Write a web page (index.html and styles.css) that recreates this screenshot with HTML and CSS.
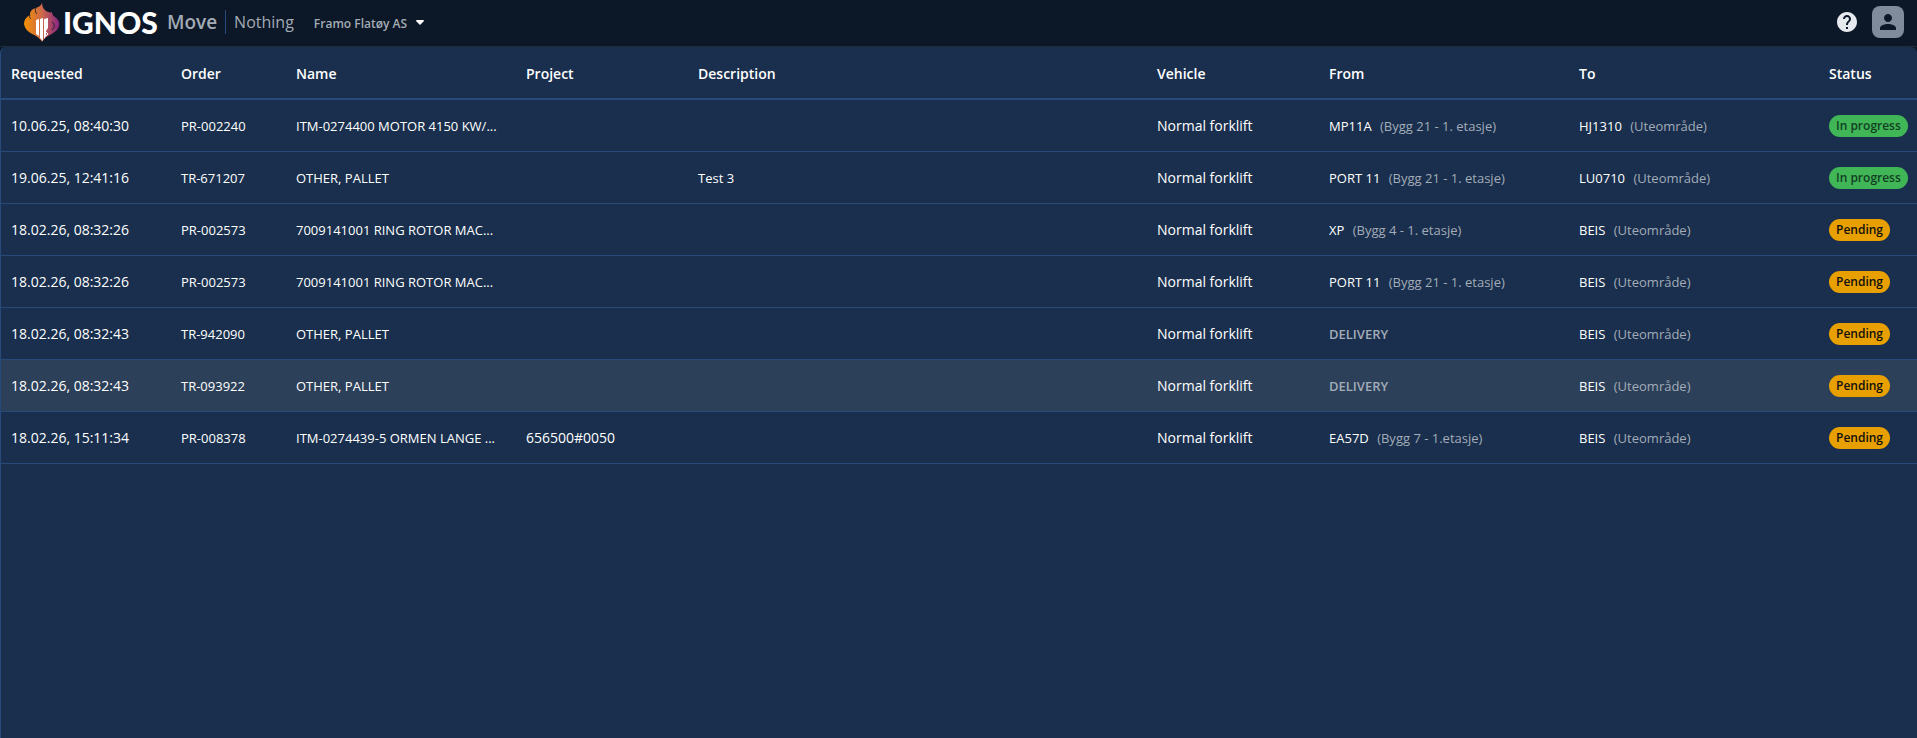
FILE: index.html
```html
<!DOCTYPE html>
<html lang="en">
<head>
    <meta charset="UTF-8">
    <meta name="viewport" content="width=device-width, initial-scale=1.0">
    <title>Ignos Move</title>
    <link rel="stylesheet" href="styles.css">
</head>
<body>
    <header class="topbar">
        <a class="logo" href="#">
            <svg class="logo-mark" viewBox="0 0 36 40" aria-hidden="true">
                <defs>
                    <linearGradient id="flame" x1="0" y1="0" x2="1" y2="0">
                        <stop offset="0" stop-color="#f39200"/>
                        <stop offset="0.5" stop-color="#cf6a4a"/>
                        <stop offset="1" stop-color="#862483"/>
                    </linearGradient>
                </defs>
                <path fill="url(#flame)" d="M18 0C18 4 19 7 22 9C24 10 26 11 28 10C28 12 29 14 31 15C34 17 36 20 35 24C34 29 29 31 24 34C21 36 19 38 18 40C17 38 15 36 12 34C6 31 1 28 0 22C0 18 2 15 6 13C6 9 8 7 12 6C15 5 18 3 18 0Z"/>
                <path fill="none" stroke="#0c1727" stroke-width="0.800" d="M12 6C11 8 11 10 13 12M6 13C5 15 6 16 7 17M28 20C31 22 31 25 28 28"/>
                <path fill="#fff" d="M12 18L15 17V34L12 32ZM16 17L19 16V39L16 36ZM20 17L24 16V26L22 29V34L20 37Z"/>
                <path fill="none" stroke="#fff" stroke-width="1" d="M22 30L24 32L22 34"/>
            </svg>
            <span class="logo-name">IGNOS</span>
            <span class="logo-app">Move</span>
        </a>
        <span class="page-name">Nothing</span>
        <div class="site-picker">
            <select class="site-select" aria-label="Site">
                <option>Framo Flatøy AS</option>
            </select>
            <svg class="site-caret" viewBox="0 0 8 5" aria-hidden="true"><path fill="#fff" d="M1 0H7Q8 0 8 1L4 5L0 1Q0 0 1 0Z"/></svg>
        </div>
        <div class="actions">
            <button class="help-btn" type="button" aria-label="Help">
                <svg viewBox="2 2 20 20"><path fill="#e6e9ed" d="M12 2C6.48 2 2 6.48 2 12s4.480 10 10 10 10-4.480 10-10S17.520 2 12 2zm1 17h-2v-2h2v2zm2.070-7.750l-.9.920C13.450 12.900 13 13.500 13 15h-2v-.5c0-1.100.45-2.100 1.170-2.830l1.240-1.260c.37-.36.59-.86.59-1.410 0-1.100-.9-2-2-2s-2 .9-2 2H8c0-2.210 1.790-4 4-4s4 1.790 4 4c0 .88-.36 1.680-.93 2.250z"/></svg>
            </button>
            <button class="avatar-btn" type="button" aria-label="Account">
                <svg viewBox="4 4 16 16"><path fill="#0c1727" d="M12 12c2.210 0 4-1.790 4-4s-1.790-4-4-4-4 1.790-4 4 1.790 4 4 4zm0 2c-2.670 0-8 1.340-8 4v2h16v-2c0-2.660-5.330-4-8-4z"/></svg>
            </button>
        </div>
    </header>

    <main class="requests">
        <table class="requests-table">
            <colgroup>
                <col class="col-requested">
                <col class="col-order">
                <col class="col-name">
                <col class="col-project">
                <col class="col-description">
                <col class="col-vehicle">
                <col class="col-place">
                <col class="col-place">
                <col class="col-status">
            </colgroup>
            <thead>
                <tr>
                    <th>Requested</th>
                    <th>Order</th>
                    <th>Name</th>
                    <th>Project</th>
                    <th>Description</th>
                    <th>Vehicle</th>
                    <th>From</th>
                    <th>To</th>
                    <th>Status</th>
                </tr>
            </thead>
            <tbody>
                <tr>
                    <td>10.06.25, 08:40:30</td>
                    <td class="small">PR-002240</td>
                    <td class="small">ITM-0274400 MOTOR 4150 KW/...</td>
                    <td></td>
                    <td class="small"></td>
                    <td>Normal forklift</td>
                    <td class="small"><span class="place">MP11A</span> <span class="area">(Bygg 21 - 1. etasje)</span></td>
                    <td class="small"><span class="place">HJ1310</span> <span class="area">(Uteområde)</span></td>
                    <td><span class="badge progress">In progress</span></td>
                </tr>
                <tr>
                    <td>19.06.25, 12:41:16</td>
                    <td class="small">TR-671207</td>
                    <td class="small">OTHER, PALLET</td>
                    <td></td>
                    <td class="small">Test 3</td>
                    <td>Normal forklift</td>
                    <td class="small"><span class="place">PORT 11</span> <span class="area">(Bygg 21 - 1. etasje)</span></td>
                    <td class="small"><span class="place">LU0710</span> <span class="area">(Uteområde)</span></td>
                    <td><span class="badge progress">In progress</span></td>
                </tr>
                <tr>
                    <td>18.02.26, 08:32:26</td>
                    <td class="small">PR-002573</td>
                    <td class="small">7009141001 RING ROTOR MAC...</td>
                    <td></td>
                    <td class="small"></td>
                    <td>Normal forklift</td>
                    <td class="small"><span class="place">XP</span> <span class="area">(Bygg 4 - 1. etasje)</span></td>
                    <td class="small"><span class="place">BEIS</span> <span class="area">(Uteområde)</span></td>
                    <td><span class="badge pending">Pending</span></td>
                </tr>
                <tr>
                    <td>18.02.26, 08:32:26</td>
                    <td class="small">PR-002573</td>
                    <td class="small">7009141001 RING ROTOR MAC...</td>
                    <td></td>
                    <td class="small"></td>
                    <td>Normal forklift</td>
                    <td class="small"><span class="place">PORT 11</span> <span class="area">(Bygg 21 - 1. etasje)</span></td>
                    <td class="small"><span class="place">BEIS</span> <span class="area">(Uteområde)</span></td>
                    <td><span class="badge pending">Pending</span></td>
                </tr>
                <tr>
                    <td>18.02.26, 08:32:43</td>
                    <td class="small">TR-942090</td>
                    <td class="small">OTHER, PALLET</td>
                    <td></td>
                    <td class="small"></td>
                    <td>Normal forklift</td>
                    <td class="small delivery">DELIVERY</td>
                    <td class="small"><span class="place">BEIS</span> <span class="area">(Uteområde)</span></td>
                    <td><span class="badge pending">Pending</span></td>
                </tr>
                <tr class="active">
                    <td>18.02.26, 08:32:43</td>
                    <td class="small">TR-093922</td>
                    <td class="small">OTHER, PALLET</td>
                    <td></td>
                    <td class="small"></td>
                    <td>Normal forklift</td>
                    <td class="small delivery">DELIVERY</td>
                    <td class="small"><span class="place">BEIS</span> <span class="area">(Uteområde)</span></td>
                    <td><span class="badge pending">Pending</span></td>
                </tr>
                <tr>
                    <td>18.02.26, 15:11:34</td>
                    <td class="small">PR-008378</td>
                    <td class="small">ITM-0274439-5 ORMEN LANGE ...</td>
                    <td>656500#0050</td>
                    <td class="small"></td>
                    <td>Normal forklift</td>
                    <td class="small"><span class="place">EA57D</span> <span class="area">(Bygg 7 - 1.etasje)</span></td>
                    <td class="small"><span class="place">BEIS</span> <span class="area">(Uteområde)</span></td>
                    <td><span class="badge pending">Pending</span></td>
                </tr>
            </tbody>
        </table>
    </main>
</body>
</html>
```

FILE: styles.css
```css
* {
    margin: 0;
    padding: 0;
    box-sizing: border-box;
}

body {
    display: flex;
    flex-direction: column;
    min-height: 100vh;
    background-color: #0c1727;
    color: #fff;
    font-family: "Open Sans", "Noto Sans", sans-serif;
    font-size: 14px;
}

.topbar {
    display: flex;
    align-items: center;
    height: 47px;
    padding: 0 13px 2px 24px;
    border-bottom: 1px solid #1e2a35;
}

.logo {
    display: flex;
    align-items: center;
    color: #fff;
    text-decoration: none;
}

.logo-mark {
    width: 36px;
    height: 40px;
}

.logo-name {
    margin-left: 3px;
    font-family: Lato, sans-serif;
    font-size: 30px;
    font-weight: 900;
    line-height: 40px;
}

.logo-app {
    margin-left: 9px;
    color: #a3abb5;
    font-size: 19px;
    font-weight: 600;
}

.page-name {
    margin-left: 8px;
    padding-left: 8px;
    border-left: 1px solid #264a7a;
    color: #a3abb5;
    font-size: 16px;
    line-height: 24px;
}

.site-picker {
    position: relative;
    margin-left: 20px;
}

.site-select {
    appearance: none;
    padding-right: 16px;
    border: none;
    background: transparent;
    color: #a3abb5;
    font-family: inherit;
    font-size: 12px;
    font-weight: 600;
    cursor: pointer;
}

.site-caret {
    position: absolute;
    top: 50%;
    right: 0;
    width: 8px;
    height: 5px;
    margin-top: -2px;
    pointer-events: none;
}

.actions {
    display: flex;
    align-items: center;
    gap: 15px;
    margin-left: auto;
}

.help-btn,
.avatar-btn {
    display: flex;
    align-items: center;
    justify-content: center;
    border: none;
    background: transparent;
    cursor: pointer;
}

.help-btn svg {
    width: 20px;
    height: 20px;
}

.avatar-btn {
    width: 32px;
    height: 32px;
    border-radius: 8px;
    background-color: #808c9c;
}

.avatar-btn svg {
    width: 16px;
    height: 16px;
}

.requests {
    flex: 1;
    border-left: 1px solid #264a7a;
    border-radius: 6px 6px 0 0;
    background-color: #192f4d;
}

.requests-table {
    width: 100%;
    border-collapse: separate;
    border-spacing: 0;
    table-layout: fixed;
}

.col-requested {
    width: 170px;
}

.col-order {
    width: 115px;
}

.col-name {
    width: 230px;
}

.col-project,
.col-vehicle {
    width: 172px;
}

.col-place {
    width: 250px;
}

.col-status {
    width: 98px;
}

.requests-table th,
.requests-table td {
    height: 52px;
    padding: 0 10px;
    border-bottom: 1px solid #264a7a;
    text-align: left;
    white-space: nowrap;
}

.requests-table th {
    height: 53px;
    padding-top: 2px;
    border-bottom-width: 2px;
    font-weight: 600;
}

.requests-table td.small {
    font-size: 13px;
}

.requests-table .active td {
    background-color: #2c405a;
}

.place {
    font-weight: 500;
}

.area {
    margin-left: 5px;
    color: #a3acb8;
}

.requests-table .delivery {
    color: #a3acb8;
    font-weight: 600;
}

.badge {
    display: inline-block;
    padding: 0 7px;
    border-radius: 11px;
    font-size: 12px;
    font-weight: 600;
    line-height: 22px;
    vertical-align: middle;
}

.progress {
    background-color: #40b656;
    color: #123f25;
}

.pending {
    background-color: #e8a000;
    color: #0f0f0f;
}

@media (max-width: 1400px) {
    .requests {
        overflow-x: auto;
    }

    .requests-table {
        min-width: 1560px;
    }
}
```
